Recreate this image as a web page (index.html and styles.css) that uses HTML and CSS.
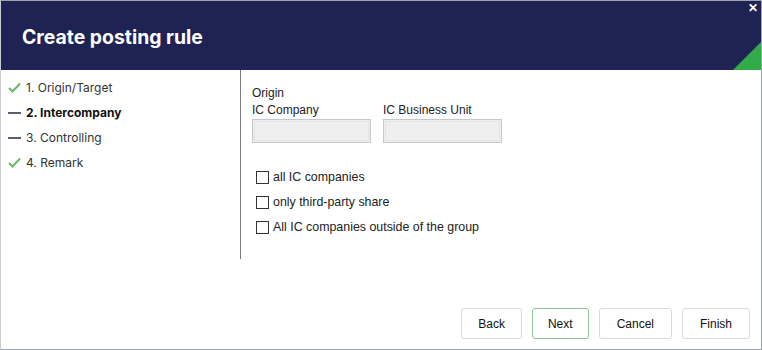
FILE: index.html
```html
<!DOCTYPE html>
<html lang="en">
<head>
  <meta charset="UTF-8">
  <title>Create posting rule</title>
  <link rel="stylesheet" href="styles.css">
</head>
<body>

  <div class="dialog">
    <div class="header">
      <h1>Create posting rule</h1>
      <span class="close">&#x2715;</span>
      <span class="corner"></span>
    </div>

    <div class="main">
      <ul class="steps">
        <li class="done"><span class="mark"><svg width="13" height="11" viewBox="0 0 13 11"><path d="M1 6 L4.5 9.5 L12 1.5" fill="none" stroke="#66bb66" stroke-width="2"/></svg></span>1. Origin/Target</li>
        <li class="current"><span class="mark"><span class="dash"></span></span>2. Intercompany</li>
        <li><span class="mark"><span class="dash"></span></span>3. Controlling</li>
        <li class="done"><span class="mark"><svg width="13" height="11" viewBox="0 0 13 11"><path d="M1 6 L4.5 9.5 L12 1.5" fill="none" stroke="#66bb66" stroke-width="2"/></svg></span>4. Remark</li>
      </ul>

      <div class="content">
        <div class="group-title">Origin</div>
        <div class="fields">
          <label class="field">IC Company<input type="text" disabled></label>
          <label class="field">IC Business Unit<input type="text" disabled></label>
        </div>

        <div class="options">
          <label class="option"><input type="checkbox"><span>all IC companies</span></label>
          <label class="option"><input type="checkbox"><span>only third-party share</span></label>
          <label class="option"><input type="checkbox"><span>All IC companies outside of the group</span></label>
        </div>
      </div>
    </div>

    <div class="footer">
      <button class="back">Back</button>
      <button class="primary">Next</button>
      <button>Cancel</button>
      <button>Finish</button>
    </div>
  </div>

</body>
</html>
```

FILE: styles.css
```css
body { margin: 0; font-family: "Liberation Sans", Arial, sans-serif; font-size: 12px; color: #222; }
.dialog { width: 762px; height: 350px; box-sizing: border-box; border: 1px solid #9da2ad; border-left-color: #c9ccd3; display: flex; flex-direction: column; background: #fff; }

.header { position: relative; height: 69px; background: #1e2353; flex: none; overflow: hidden; }
.header h1 { margin: 0; padding: 24px 0 0 21px; color: #fff; font-family: Inter, "Noto Sans", sans-serif; font-size: 19.4px; font-weight: 700; line-height: 24px; }
.close { position: absolute; top: 0; right: 3px; color: #fff; font-size: 12px; font-weight: 700; line-height: 14px; }
.corner { position: absolute; right: 0; bottom: 0; width: 0; height: 0; border-style: solid; border-width: 0 0 28px 28px; border-color: transparent transparent #33aa48 transparent; }

.main { display: flex; height: 189px; flex: none; }
.steps { list-style: none; margin: 0; padding: 5px 0 0 0; width: 239px; border-right: 1px solid #7a7a7a; font-family: Inter, "Noto Sans", sans-serif; font-size: 12px; color: #333; }
.steps li { display: flex; align-items: center; height: 25px; }
.steps li.current { font-weight: 700; color: #111; }
.mark { width: 25px; display: flex; justify-content: flex-start; padding-left: 7px; box-sizing: border-box; }
.dash { display: block; width: 13px; height: 2px; background: #5a5f6a; }

.content { padding: 16px 0 0 11px; }
.group-title { line-height: 14px; }
.fields { display: flex; gap: 12px; margin-top: 3px; }
.field { display: flex; flex-direction: column; line-height: 14px; }
.field input { margin: 2px 0 0; width: 119px; height: 24px; box-sizing: border-box; background: #efefef; border: 1px solid #c3c8d0; outline: 1px solid #e4e4e4; outline-offset: -3px; }

.options { margin-top: 27px; padding-left: 4px; display: flex; flex-direction: column; gap: 11px; font-size: 12.4px; }
.option { display: flex; align-items: center; gap: 4px; line-height: 14px; }
.option input { appearance: none; margin: 0; width: 13px; height: 13px; border: 1px solid #333; background: #fff; box-sizing: border-box; }

.footer { flex: 1; display: flex; justify-content: flex-end; align-items: flex-end; gap: 10px; padding: 0 11px 10px 0; }
.footer button { height: 31px; padding: 0 17px; background: #fff; border: 1px solid #d6dbe3; border-radius: 3px; font-family: "Liberation Sans", Arial, sans-serif; font-size: 12px; color: #111; }
.footer button.back { padding: 0 16px; }
.footer button.primary { padding: 0 15px; border-color: #8cc39a; }
```
